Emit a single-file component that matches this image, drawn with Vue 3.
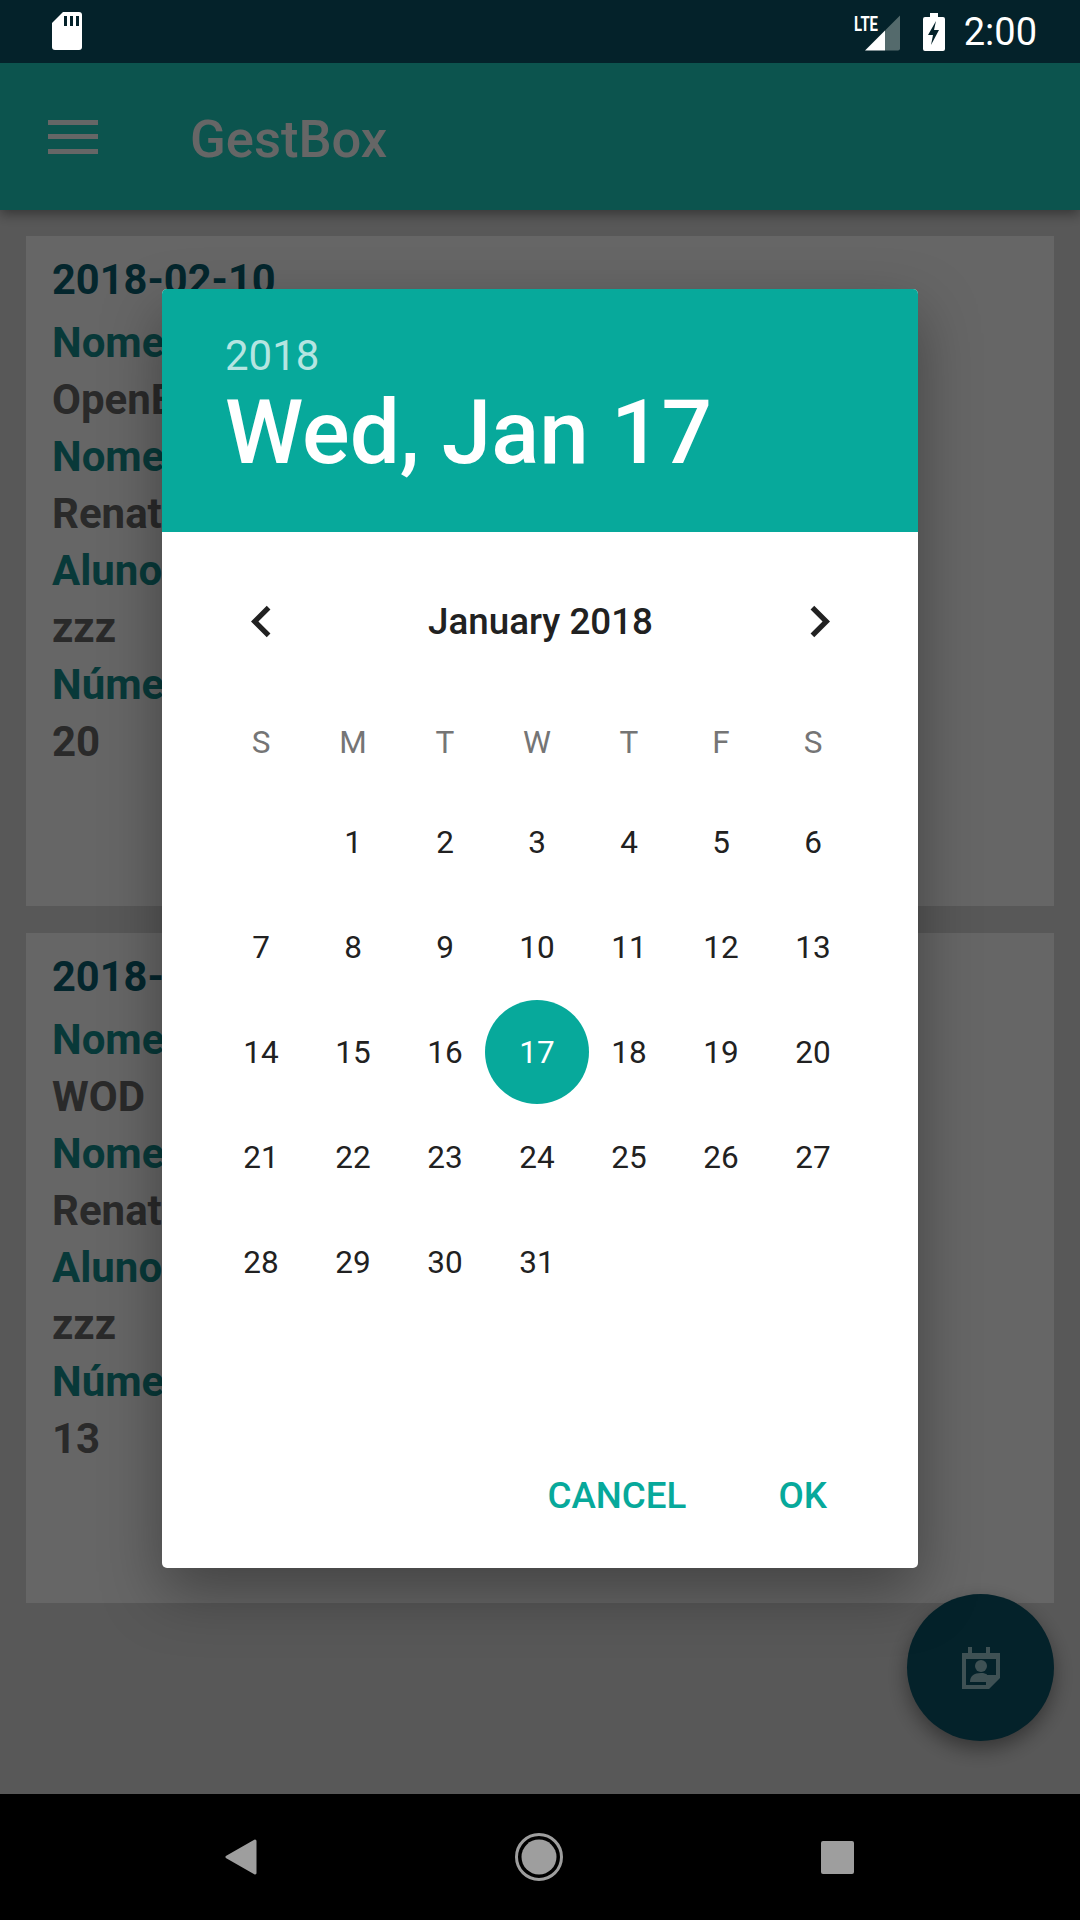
<script setup>
const cards = [
  { date: "2018-02-10", aula: "OpenBox", prof: "Renato", aluno: "zzz", num: "20" },
  { date: "2018-02-09", aula: "WOD", prof: "Renato", aluno: "zzz", num: "13" }
];
const weekDays = ["S", "M", "T", "W", "T", "F", "S"];
const days = [null];
for (let i = 1; i <= 31; i++) days.push(i);
</script>

<template>
  <div class="page">
    <div class="status-bar">
      <svg class="sd" width="30" height="38" viewBox="0 0 30 38">
        <path d="M11 0H27a3 3 0 0 1 3 3V35a3 3 0 0 1-3 3H3a3 3 0 0 1-3-3V11z" fill="#fff" />
        <path d="M12 4h3v10h-3zM18 4h3v10h-3zM24 4h3v10h-3z" fill="#04222a" />
      </svg>
      <div class="status-right">
        <svg width="96" height="40" viewBox="0 0 96 40">
          <text x="4" y="18.5" class="lte" textLength="24" lengthAdjust="spacingAndGlyphs">LTE</text>
          <path d="M15 38.5L35 18.5V38.5z" fill="#fff" />
          <path d="M35 18.5L50 3.5V36.5a2 2 0 0 1-2 2H35z" fill="#546a6c" />
        </svg>
        <svg class="battery" width="22" height="38" viewBox="0 0 22 38">
          <path d="M7 0h8v4h5a2 2 0 0 1 2 2V36a2 2 0 0 1-2 2H2a2 2 0 0 1-2-2V6a2 2 0 0 1 2-2h5z" fill="#fff" />
          <path d="M13 8L5 22h5l-2 10 8-15h-5z" fill="#04222a" />
        </svg>
        <span class="clock">2:00</span>
      </div>
    </div>

    <div class="content">
      <div class="toolbar">
        <div class="menu-icon"><i></i><i></i><i></i></div>
        <span class="toolbar-title">GestBox</span>
      </div>

      <div class="list">
        <div v-for="c in cards" :key="c.date" class="card">
          <div class="date">{{ c.date }}</div>
          <div class="label">Nome</div>
          <div class="value">{{ c.aula }}</div>
          <div class="label">Nome</div>
          <div class="value">{{ c.prof }}</div>
          <div class="label">Aluno</div>
          <div class="value">{{ c.aluno }}</div>
          <div class="label">Número</div>
          <div class="value">{{ c.num }}</div>
        </div>
      </div>

      <div class="fab">
        <svg width="40" height="44" viewBox="0 0 40 44">
          <path d="M1 7h6V1h4v6h14V1h4v6h10v25L28 43H1z" fill="#9ecad2" />
          <path d="M5 13h30v16H25v10H5z" fill="#0a5569" />
          <circle cx="20" cy="20" r="6" fill="#9ecad2" />
          <path d="M9 36c0-6 4-9 11-9 3 0 5 .6 6 1.5V36z" fill="#9ecad2" />
        </svg>
      </div>

      <div class="overlay">
        <div class="dialog">
          <div class="dialog-head">
            <div class="year">2018</div>
            <div class="full-date">Wed, Jan 17</div>
          </div>
          <div class="month-row">
            <svg width="63" height="63" viewBox="0 0 24 24">
              <path d="M15.41 7.41L14 6l-6 6 6 6 1.41-1.41L10.83 12z" fill="#212121" />
            </svg>
            <span class="month">January 2018</span>
            <svg width="63" height="63" viewBox="0 0 24 24">
              <path d="M10 6L8.59 7.41 13.17 12l-4.58 4.59L10 18l6-6z" fill="#212121" />
            </svg>
          </div>
          <div class="week">
            <span v-for="(d, i) in weekDays" :key="i">{{ d }}</span>
          </div>
          <div class="days">
            <span v-for="(d, i) in days" :key="i" class="day" :class="{ selected: d === 17 }">{{ d }}</span>
          </div>
          <div class="actions">
            <span class="btn">CANCEL</span>
            <span class="btn">OK</span>
          </div>
        </div>
      </div>
    </div>

    <div class="nav-bar">
      <svg class="back" width="32" height="36" viewBox="0 0 32 36">
        <path d="M30 2L2 18l28 16z" fill="#9e9e9e" stroke="#9e9e9e" stroke-width="3" stroke-linejoin="round" />
      </svg>
      <svg width="48" height="48" viewBox="0 0 48 48">
        <circle cx="24" cy="24" r="22.5" fill="none" stroke="#9e9e9e" stroke-width="3" />
        <circle cx="24" cy="24" r="17.5" fill="#9e9e9e" />
      </svg>
      <div class="square"></div>
    </div>
  </div>
</template>

<style>
html, body {
  margin: 0;
  background: #000;
}
</style>

<style scoped>
.page {
  width: 1080px;
  height: 1920px;
  display: flex;
  flex-direction: column;
  font-family: Roboto, "Liberation Sans", sans-serif;
  overflow: hidden;
}
.status-bar {
  height: 63px;
  background: #04222a;
  display: flex;
  align-items: center;
  justify-content: space-between;
  padding: 0 43px 0 52px;
  flex: none;
}
.sd {
  margin-top: -1px;
}
.status-right {
  display: flex;
  align-items: center;
}
.lte {
  font-family: Roboto, sans-serif;
  font-size: 20px;
  font-weight: 700;
  fill: #fff;
}
.battery {
  margin: 0 0 0 -23px;
}
.clock {
  color: #fff;
  font-size: 38px;
  margin-left: 19px;
  line-height: 63px;
  padding-top: 2px;
}
.content {
  position: relative;
  flex: 1;
  background: #dcdcdc;
  overflow: hidden;
}
.toolbar {
  height: 147px;
  background: #1fd2c3;
  display: flex;
  align-items: center;
  padding-left: 48px;
  box-shadow: 0 4px 12px rgba(0, 0, 0, 0.4);
  position: relative;
}
.menu-icon {
  width: 50px;
  display: flex;
  flex-direction: column;
  gap: 9.5px;
  margin-right: 92px;
}
.menu-icon i {
  display: block;
  height: 5px;
  background: #fff;
}
.toolbar-title {
  font-size: 52.5px;
  font-weight: 500;
  color: #fff;
  padding-top: 4px;
}
.list {
  padding: 26px 26px 0;
  display: flex;
  flex-direction: column;
  gap: 27px;
}
.card {
  height: 670px;
  box-sizing: border-box;
  background: #fff;
  padding: 15px 26px;
  font-size: 42px;
  font-weight: 700;
  line-height: 57px;
}
.date {
  color: #0a6070;
  font-size: 41.6px;
  line-height: 58px;
  margin-bottom: 5px;
}
.label {
  color: #169090;
}
.value {
  color: #6a6a6a;
}
.fab {
  position: absolute;
  right: 26px;
  bottom: 53px;
  width: 147px;
  height: 147px;
  border-radius: 50%;
  background: #0a5569;
  display: flex;
  align-items: center;
  justify-content: center;
  box-shadow: 0 8px 20px rgba(0, 0, 0, 0.4);
}
.overlay {
  position: absolute;
  inset: 0;
  background: rgba(0, 0, 0, 0.6);
  display: flex;
  align-items: center;
  justify-content: center;
}
.dialog {
  width: 756px;
  height: 1279px;
  background: #fff;
  border-radius: 5px;
  overflow: hidden;
  box-shadow: 0 24px 60px rgba(0, 0, 0, 0.35);
  display: flex;
  flex-direction: column;
}
.dialog-head {
  height: 243px;
  flex: none;
  box-sizing: border-box;
  background: #07a99b;
  padding: 42px 0 0 63px;
  color: #fff;
}
.year {
  font-size: 42px;
  line-height: 50px;
  color: #b5e5e1;
}
.full-date {
  font-size: 89px;
  font-weight: 500;
  line-height: 104px;
}
.month-row {
  display: flex;
  align-items: center;
  justify-content: space-between;
  padding: 58px 67px 0 68px;
}
.month {
  font-size: 36.75px;
  font-weight: 500;
  color: #212121;
}
.week {
  display: grid;
  grid-template-columns: repeat(7, 92px);
  padding: 0 53px;
  margin-top: 65px;
  font-size: 31.5px;
  line-height: 50px;
  text-align: center;
  color: #757575;
}
.days {
  display: grid;
  grid-template-columns: repeat(7, 92px);
  grid-auto-rows: 105px;
  padding: 0 53px;
  margin-top: 22px;
  font-size: 31.5px;
  color: #212121;
}
.day {
  display: flex;
  align-items: center;
  justify-content: center;
  position: relative;
  z-index: 0;
}
.day.selected {
  color: #fff;
}
.day.selected::before {
  content: "";
  position: absolute;
  z-index: -1;
  left: -6px;
  top: 0;
  width: 104px;
  height: 104px;
  border-radius: 50%;
  background: #07a99b;
}
.actions {
  margin-top: auto;
  display: flex;
  justify-content: flex-end;
  gap: 92px;
  padding: 0 91px 51px 0;
}
.btn {
  font-size: 36.75px;
  font-weight: 500;
  color: #07a99b;
}
.nav-bar {
  height: 126px;
  flex: none;
  background: #000;
  display: flex;
  align-items: center;
  padding-left: 225px;
}
.back {
  margin-right: 258px;
}
.square {
  width: 33px;
  height: 33px;
  border-radius: 2px;
  background: #9e9e9e;
  margin-left: 258px;
}
</style>
